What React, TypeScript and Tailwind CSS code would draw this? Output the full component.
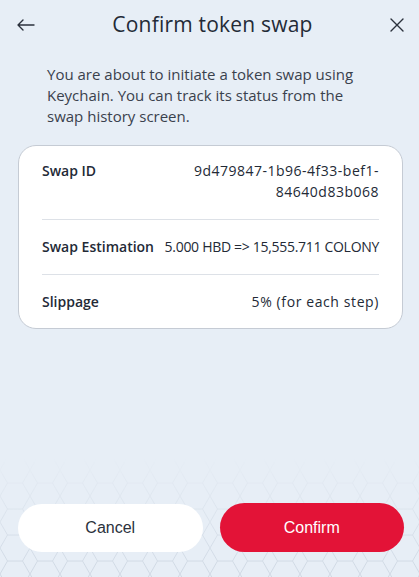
import React from "react";

function Hexes() {
  return (
    <svg className="absolute left-0 bottom-0 w-full h-[120px] pointer-events-none" viewBox="0 0 419 120" preserveAspectRatio="none">
      <defs>
        <pattern id="hex" width="30" height="26" patternUnits="userSpaceOnUse">
          <path d="M7.5 0 L22.5 0 L30 13 L22.5 26 L7.5 26 L0 13 Z" fill="none" stroke="#c9d3df" strokeWidth="0.8" />
        </pattern>
        <linearGradient id="fade" x1="0" y1="0" x2="0" y2="1">
          <stop offset="0" stopColor="#fff" stopOpacity="0" />
          <stop offset="0.5" stopColor="#fff" stopOpacity="0.5" />
          <stop offset="1" stopColor="#fff" stopOpacity="1" />
        </linearGradient>
        <mask id="m">
          <rect width="419" height="120" fill="url(#fade)" />
        </mask>
      </defs>
      <rect width="419" height="120" fill="url(#hex)" mask="url(#m)" />
    </svg>
  );
}

export default function App() {
  const font = { fontFamily: "'Open Sans', 'Noto Sans', sans-serif" };
  return (
    <div className="relative w-[419px] h-[577px] bg-[#e7eef6] overflow-hidden flex flex-col text-[#232a36]" style={font}>
      <Hexes />
      <div className="relative flex items-center justify-between pl-[17px] pr-[15px] pt-[10px] h-[30px] box-content">
        <svg width="18" height="12" viewBox="0 0 18 12" fill="none" stroke="#2b313c" strokeWidth="1.4" strokeLinecap="round" strokeLinejoin="round">
          <path d="M17 6H1M6 1L1 6l5 5" />
        </svg>
        <div className="text-[21px] font-medium tracking-[0.2px]">Confirm token swap</div>
        <svg width="14" height="14" viewBox="0 0 14 14" fill="none" stroke="#2b313c" strokeWidth="1.4" strokeLinecap="round">
          <path d="M1 1l12 12M13 1L1 13" />
        </svg>
      </div>
      <p className="relative mt-[24px] px-[47px] text-[15px] leading-[21px] text-[#3a414d]">
        You are about to initiate a token swap using Keychain. You can track its status from the swap history screen.
      </p>
      <div className="relative ml-[18px] mr-[16px] mt-[18px] bg-white border border-[#c5cbd4] rounded-[18px] pl-[23px] pr-[23px] py-[14px] text-[14px]">
        <div className="flex justify-between pb-[17px] border-b border-[#dde1e7]">
          <span className="font-semibold">Swap ID</span>
          <span className="text-right leading-[21px] w-[210px] tracking-[0.5px]">9d479847-1b96-4f33-bef1-84640d83b068</span>
        </div>
        <div className="flex justify-between pt-[16px] pb-[17px] border-b border-[#dde1e7] whitespace-nowrap">
          <span className="font-semibold">Swap Estimation</span>
          <span className="tracking-[-0.3px]">5.000 HBD =&gt; 15,555.711 COLONY</span>
        </div>
        <div className="flex justify-between pt-[16px] pb-[2px]">
          <span className="font-semibold">Slippage</span>
          <span className="tracking-[0.6px]">5% (for each step)</span>
        </div>
      </div>
      <div className="flex-1" />
      <div className="relative flex gap-[17px] pl-[18px] pr-[15px] mb-[25px]" style={{ fontFamily: "'Liberation Sans', Arial, sans-serif" }}>
        <button className="flex-1 h-[48px] self-center rounded-full bg-white text-[16px] text-[#2b313c]">Cancel</button>
        <button className="flex-1 h-[49px] rounded-full bg-[#e31337] text-[16px] text-white">Confirm</button>
      </div>
    </div>
  );
}
